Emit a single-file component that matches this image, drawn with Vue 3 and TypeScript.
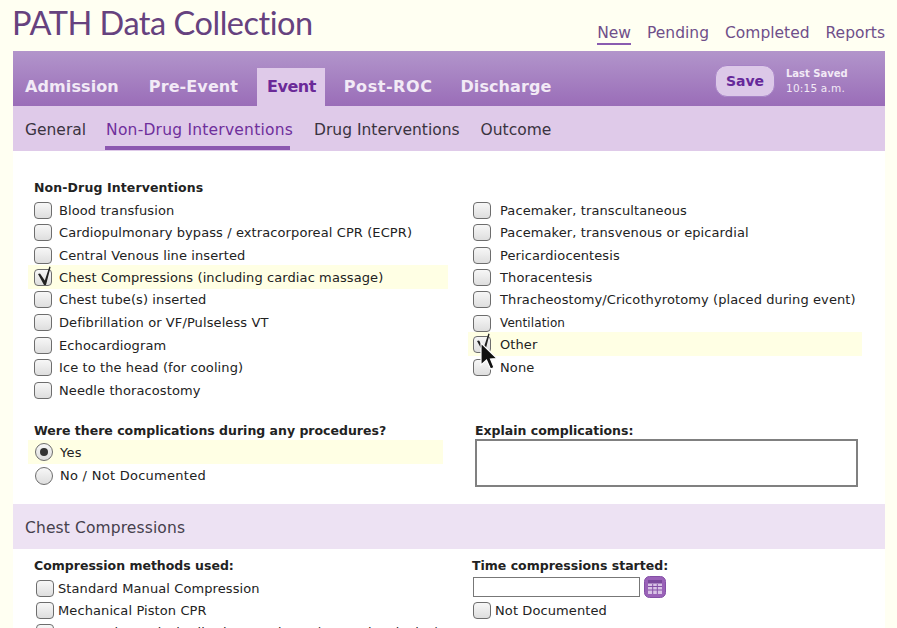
<script setup lang="ts">
interface Row { label: string; h: number; checked?: boolean; small?: boolean }
const leftRows: Row[] = [
  { label: 'Blood transfusion', h: 22 },
  { label: 'Cardiopulmonary bypass / extracorporeal CPR (ECPR)', h: 23 },
  { label: 'Central Venous line inserted', h: 22 },
  { label: 'Chest Compressions (including cardiac massage)', h: 24, checked: true },
  { label: 'Chest tube(s) inserted', h: 22 },
  { label: 'Defibrillation or VF/Pulseless VT', h: 25 },
  { label: 'Echocardiogram', h: 21 },
  { label: 'Ice to the head (for cooling)', h: 22 },
  { label: 'Needle thoracostomy', h: 24 },
]
const rightRows: Row[] = [
  { label: 'Pacemaker, transcultaneous', h: 22 },
  { label: 'Pacemaker, transvenous or epicardial', h: 23 },
  { label: 'Pericardiocentesis', h: 22 },
  { label: 'Thoracentesis', h: 22 },
  { label: 'Thracheostomy/Cricothyrotomy (placed during event)', h: 23 },
  { label: 'Ventilation', h: 24, small: true },
  { label: 'Other', h: 24, checked: true },
  { label: 'None', h: 22 },
]
const tabs = ['Admission', 'Pre-Event', 'Event', 'Post-ROC', 'Discharge']
const subs = ['General', 'Non-Drug Interventions', 'Drug Interventions', 'Outcome']
const navs = ['New', 'Pending', 'Completed', 'Reports']
</script>

<template>
  <div class="page">
    <header class="top">
      <h1 class="title">PATH Data Collection</h1>
      <nav class="nav">
        <a v-for="n in navs" :key="n" :class="{ on: n === 'New' }">{{ n }}</a>
      </nav>
    </header>

    <div class="tabbar">
      <div class="tabs">
        <a v-for="t in tabs" :key="t" class="tab" :class="[t.toLowerCase(), { on: t === 'Event' }]">{{ t }}</a>
      </div>
      <button class="save">Save</button>
      <div class="saved"><b>Last Saved</b><span>10:15 a.m.</span></div>
    </div>

    <div class="subbar">
      <a v-for="s in subs" :key="s" class="sub" :class="{ on: s === 'Non-Drug Interventions' }">{{ s }}</a>
    </div>

    <main class="content">
      <div class="cols first">
        <section class="colL">
          <h3 class="head nd-head">Non-Drug Interventions</h3>
          <div
            v-for="r in leftRows"
            :key="r.label"
            class="row"
            :class="{ hl: r.checked }"
            :style="{ height: r.h + 'px' }"
          >
            <span class="cb">
              <svg v-if="r.checked" class="tick" width="18" height="22" viewBox="0 0 18 22">
                <path d="M4 10 L6 9.5 L10.8 16.5 L15.4 2.5 L16.6 3 L12 21 L10 21 Z" fill="#222" />
              </svg>
            </span>
            <span class="lab">{{ r.label }}</span>
          </div>
        </section>
        <section class="colR">
          <div
            v-for="r in rightRows"
            :key="r.label"
            class="row right"
            :class="{ hl: r.checked }"
            :style="{ height: r.h + 'px' }"
          >
            <span class="cb">
              <svg v-if="r.checked" class="tick" width="18" height="22" viewBox="0 0 18 22">
                <path d="M4 10 L6 9.5 L10.8 16.5 L15.4 2.5 L16.6 3 L12 21 L10 21 Z" fill="#222" />
              </svg>
            </span>
            <span class="lab" :class="{ small: r.small }">{{ r.label }}</span>
            <svg v-if="r.label === 'Other'" class="cursor" width="20" height="30" viewBox="0 0 20 30">
              <path d="M2 1 L2 23 L7.5 18 L11.5 27 L15 25.5 L11.5 17 L18 16.5 Z" fill="#111" stroke="#fff" stroke-width="1.2" />
            </svg>
          </div>
        </section>
      </div>

      <div class="cols second">
        <section class="colL">
          <h3 class="head q">Were there complications during any procedures?</h3>
          <div class="row radio hl">
            <span class="rd"><i></i></span><span class="lab">Yes</span>
          </div>
          <div class="row radio">
            <span class="rd"></span><span class="lab">No / Not Documented</span>
          </div>
        </section>
        <section class="colR">
          <h3 class="head q">Explain complications:</h3>
          <div class="textarea"></div>
        </section>
      </div>

      <div class="band">Chest Compressions</div>

      <div class="cols third">
        <section class="colL">
          <h3 class="head">Compression methods used:</h3>
          <div class="row tight"><span class="cb"></span><span class="lab">Standard Manual Compression</span></div>
          <div class="row tight"><span class="cb"></span><span class="lab">Mechanical Piston CPR</span></div>
          <div class="row tight"><span class="cb"></span><span class="lab">Automatic Load-Distributing Band CPR (AutoPulse device)</span></div>
        </section>
        <section class="colR">
          <h3 class="head">Time compressions started:</h3>
          <div class="timeline">
            <div class="timein"></div>
            <svg class="cal" width="22" height="22" viewBox="0 0 22 22">
              <rect x="0.5" y="0.5" width="21" height="21" rx="5" fill="#9a62b8" stroke="#8450a6" />
              <rect x="4" y="4" width="14" height="14" fill="#d9c3e6" />
              <rect x="4" y="4" width="14" height="3.5" fill="#7b4a9c" />
              <path d="M4 10.5H18M4 14H18M8.7 8V18M13.3 8V18" stroke="#8450a6" stroke-width="1" fill="none" />
            </svg>
          </div>
          <div class="row tight nd"><span class="cb"></span><span class="lab">Not Documented</span></div>
        </section>
      </div>
    </main>
  </div>
</template>

<style>
html, body { margin: 0; background: #fffff2; overflow: hidden; }
</style>

<style scoped>
.page {
  width: 872px;
  height: 628px;
  margin-left: 13px;
  overflow: hidden;
  font-family: "DejaVu Sans", Verdana, sans-serif;
  color: #222;
}
.top { height: 51px; display: flex; justify-content: space-between; box-sizing: border-box; }
.title {
  margin: 3px 0 0 -1px;
  font: 400 32.5px/40px Lato, "Open Sans", sans-serif;
  color: #66427f;
  letter-spacing: -0.47px;
}
.nav { display: flex; gap: 16px; padding-top: 24px; font-size: 15.5px; line-height: 19px; color: #6f4f8a; }
.nav a { height: 19px; }
.nav a.on { border-bottom: 2px solid #8a5cb0; }

.tabbar {
  height: 55px;
  display: flex;
  background: linear-gradient(#b295cb, #9a6db8);
  position: relative;
}
.tabs { display: flex; align-items: flex-end; gap: 10px; padding-left: 2px; width: 693px; box-sizing: border-box; }
.tab {
  height: 38px;
  padding: 0 10px;
  font-weight: 700;
  font-size: 16px;
  line-height: 38px;
  letter-spacing: 0.1px;
  color: #f2eaf6;
}
.tab.on {
  background: #dfcae9;
  color: #6b2a98;
  letter-spacing: -0.5px;
  padding: 0 9px 0 10px;
  margin: 0 -1px;
}
.tab.post-roc { letter-spacing: 0.55px; }
.tab.discharge { margin-left: -2px; }
.save {
  margin: 14px 0 0 9px;
  width: 60px;
  height: 32px;
  padding: 0;
  border: 1px solid #a783c6;
  border-radius: 12px;
  background: #dcc8e8;
  color: #66289a;
  font: 700 14px "DejaVu Sans", sans-serif;
}
.saved {
  display: flex;
  flex-direction: column;
  margin: 16px 0 0 11px;
  font-size: 10.5px;
  line-height: 14px;
  color: #f2eaf6;
}
.saved b { font-size: 10px; }
.saved span { letter-spacing: 0.2px; }

.subbar {
  height: 45px;
  display: flex;
  gap: 21px;
  padding-left: 12px;
  box-sizing: border-box;
  background: #dfcae9;
  font-size: 15.5px;
  line-height: 49px;
  color: #3a3340;
}
.sub { height: 45px; box-sizing: border-box; white-space: nowrap; }
.sub:first-child { margin-right: -1px; }
.sub.on { color: #6f2f9c; position: relative; letter-spacing: 0.22px; }
.sub.on::after {
  content: "";
  position: absolute;
  left: -1px;
  right: 3px;
  bottom: 1px;
  height: 4px;
  background: #8c57b0;
}

.content { background: #fff; height: 477px; }
.cols { display: flex; }
.colL { width: 440px; padding-left: 21px; box-sizing: border-box; }
.first { padding-top: 28px; height: 274px; box-sizing: border-box; }
.first .colR { padding-top: 20px; }
.second { height: 79px; }
.head { margin: 0; font-size: 12.5px; line-height: 18px; font-weight: 700; color: #222; }
.nd-head { margin-bottom: 2px; letter-spacing: 0.12px; }
.head.q { height: 12px; line-height: 12px; }
.row {
  display: flex;
  align-items: center;
  font-size: 13px;
  white-space: nowrap;
  position: relative;
}
.hl { background: #ffffe4; margin-left: -6px; padding-left: 6px; width: 420px; box-sizing: border-box; }
.first .colL .hl { margin-top: -1px; margin-bottom: -1px; }
.right { margin-left: 20px; width: 388px; }
.right .lab, .right.hl .lab { margin-left: 9px; }
.right.hl { margin-left: 15px; width: 394px; padding-left: 5px; margin-top: -3px; }
.cb {
  width: 16px;
  height: 15px;
  flex: none;
  border: 1px solid #6d6d6d;
  border-radius: 4px;
  background: linear-gradient(#f7f7f7, #dedede);
  position: relative;
}
.tick { position: absolute; left: -1px; top: -6px; }
.lab { margin-left: 7px; letter-spacing: 0.1px; }
.lab.small { font-size: 12px; }
.cursor { position: absolute; left: 11px; top: 10px; z-index: 2; }

.radio { height: 23px; }
.radio.hl { height: 24px; margin-top: 3px; width: 415px; }
.rd {
  width: 16px;
  height: 16px;
  flex: none;
  margin-left: 1px;
  border: 1px solid #6d6d6d;
  border-radius: 50%;
  background: linear-gradient(#f7f7f7, #dedede);
  display: flex;
  align-items: center;
  justify-content: center;
}
.rd i { width: 8px; height: 8px; border-radius: 50%; background: #333; }
.radio .lab { margin-left: 7px; letter-spacing: 0.27px; }

.second .colR { margin-left: 22px; }
.textarea {
  margin-top: 2px;
  width: 379px;
  height: 44px;
  border: 2px solid #808080;
  background: #fff;
}

.band {
  height: 45px;
  background: #ede2f3;
  padding-left: 12px;
  font-size: 15.5px;
  line-height: 49px;
  letter-spacing: 0.12px;
  color: #45404c;
}
.third { padding-top: 8px; }
.tight { height: 22px; }
.tight:first-of-type { margin-top: 2px; }
.third .lab { margin-left: 4px; }
.third .colL .row { margin-left: 2px; }
.third .colR { margin-left: 19px; }
.timeline { display: flex; align-items: center; gap: 4px; height: 22px; margin-top: 1px; margin-left: 1px; }
.timein { width: 165px; height: 18px; border: 1px solid #777; background: #fff; }
.nd { margin-top: 1px; margin-left: 1px; }
</style>
